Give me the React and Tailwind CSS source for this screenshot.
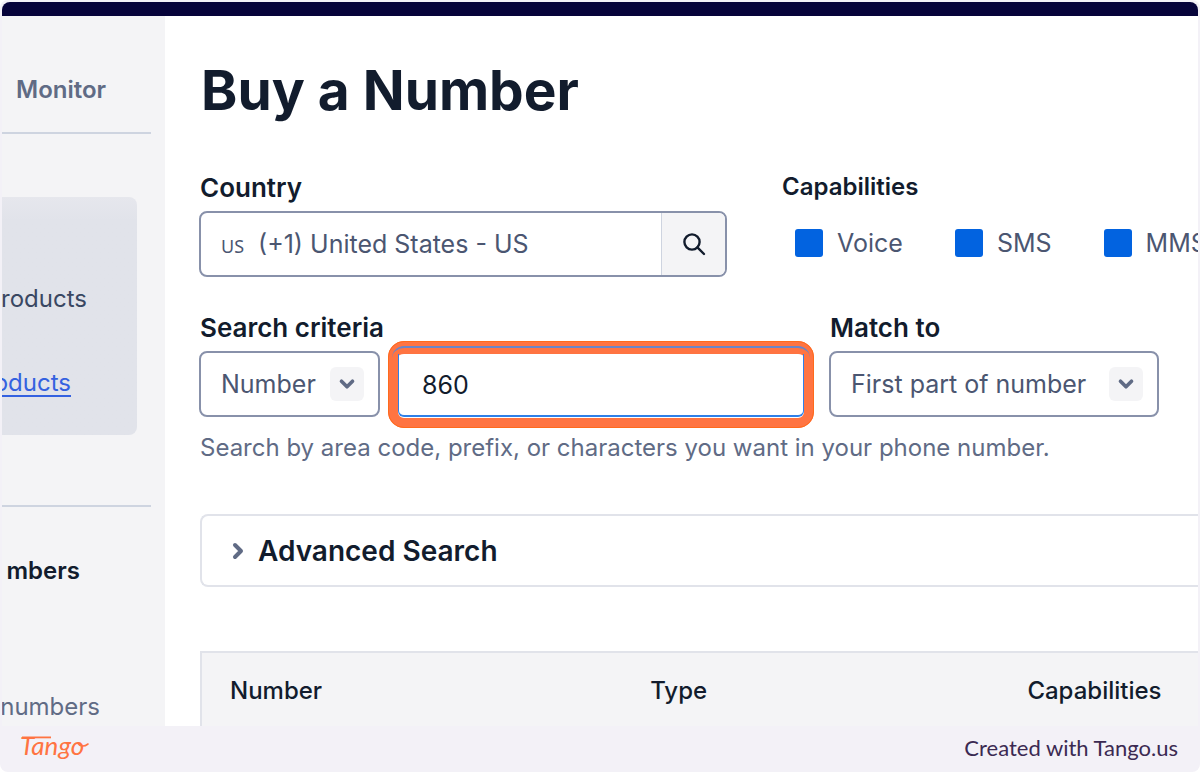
import { ChevronDown, ChevronRight } from 'lucide-react';

const capabilities = ['Voice', 'SMS', 'MMS'];

const Label = ({ htmlFor, children }) => (
  <label htmlFor={htmlFor} className="block pl-px text-[26px] leading-8 font-semibold text-[#121c2d] whitespace-nowrap">
    {children}
  </label>
);

const SelectBox = ({ id, options, className }) => (
  <div className={`relative h-[66px] ${className}`}>
    <select
      id={id}
      className="h-full w-full appearance-none rounded-lg border-2 border-[#8891aa] bg-white pt-0.5 pl-5 pr-14 text-[25px] text-[#4b5671] outline-none"
    >
      {options.map((option) => (
        <option key={option}>{option}</option>
      ))}
    </select>
    <span className="pointer-events-none absolute top-4 right-4 flex h-[34px] w-[34px] items-center justify-center rounded-md bg-[#f4f4f6]">
      <ChevronDown className="h-[22px] w-[22px] text-[#606b85]" strokeWidth={4} />
    </span>
  </div>
);

const Sidebar = () => (
  <aside className="w-[163px] shrink-0 overflow-hidden bg-[#f4f4f6]">
    <nav className="flex flex-col text-2xl leading-8">
      <div className="mr-3.5 border-b-2 border-[#ced4e0] pt-[58px] pb-[26px] pl-3.5">
        <a href="#monitor" className="font-semibold text-[#606b85]">Monitor</a>
      </div>
      <div className="mt-[63px] mr-7 flex h-[238px] flex-col items-end gap-[52px] overflow-hidden rounded-r-lg bg-linear-to-b from-[#e6e7ed] to-[#e1e3ea] to-10% pt-[86px]">
        <a href="#products" className="mr-[50px] text-[#394762]">roducts</a>
        <a href="#all-products" className="mr-[66px] text-[#3461e0] underline underline-offset-4">oducts</a>
      </div>
      <div className="mt-[70px] mr-3.5 border-b-2 border-[#ced4e0]"></div>
      <div className="mt-12 flex flex-col items-end gap-[104px]">
        <span className="mr-[85px] font-semibold text-[#121c2d]">mbers</span>
        <a href="#numbers" className="mr-[65px] text-[#606b85]">numbers</a>
      </div>
    </nav>
  </aside>
);

const CountryField = () => (
  <div className="w-[528px]">
    <Label htmlFor="country">Country</Label>
    <div className="mt-[7px] flex h-[66px] overflow-hidden rounded-lg border-2 border-[#8891aa] text-[#4b5671]">
      <span className="flex items-center pt-1 pl-5 font-['Noto_Sans',sans-serif] text-lg">US</span>
      <input
        id="country"
        type="text"
        defaultValue="(+1) United States - US"
        className="min-w-0 flex-1 pt-0.5 pl-3.5 text-[25px] outline-none"
      />
      <button type="button" aria-label="Search" className="flex w-16 items-center justify-center border-l border-[#ced4e0] bg-[#f4f4f6] text-[#121c2d]">
        <svg className="h-6 w-6" viewBox="0 0 24 24" fill="none" stroke="currentColor" strokeWidth="2.4">
          <circle cx="10" cy="10" r="7.6" />
          <path d="M15.4 15.4L22 22" strokeLinecap="round" />
        </svg>
      </button>
    </div>
  </div>
);

const CapabilitiesField = () => (
  <fieldset className="min-w-0 flex-1">
    <legend className="text-2xl leading-[30px] font-semibold text-[#121c2d]">Capabilities</legend>
    <div className="mt-[26px] flex gap-[52px] pl-[13px]">
      {capabilities.map((name) => (
        <label key={name} className="flex shrink-0 items-center gap-3.5 text-[25px] leading-[30px] text-[#4b5671]">
          <input type="checkbox" defaultChecked className="h-7 w-7 appearance-none rounded-[3px] bg-[#0263e0]" />
          {name}
        </label>
      ))}
    </div>
  </fieldset>
);

const TangoLogo = () => (
  <svg className="h-9 w-[72px] overflow-visible" viewBox="0 0 72 36" role="img" aria-label="Tango">
    <path d="M2 7.4H31" stroke="#ff7442" strokeWidth="1.8" fill="none" />
    <text x="0" y="25" fill="#ff7442" fontFamily="Lato, sans-serif" fontStyle="italic" fontWeight="400" fontSize="26">
      Tango
    </text>
    <path d="M58 13.500C60 16.500 64 17 68 14" stroke="#ff7442" strokeWidth="1.6" strokeLinecap="round" fill="none" />
  </svg>
);

export default function App() {
  return (
    <div className="h-screen bg-white font-['Inter',sans-serif]">
      <div className="flex h-full flex-col overflow-hidden rounded-lg bg-[#f3f1f7] px-0.5 pt-0.5">
        <header className="h-3.5 shrink-0 rounded-t-lg bg-[#06033a]"></header>

        <div className="flex min-h-0 flex-1 overflow-hidden bg-white">
          <Sidebar />

          <main className="min-w-0 flex-1 overflow-hidden pl-[34px]">
            <h1 className="mt-10 pl-0.5 text-[55px] leading-[68px] font-bold text-[#121c2d]">Buy a Number</h1>

            <div className="mt-12 flex gap-[55px]">
              <CountryField />
              <CapabilitiesField />
            </div>

            <div className="mt-[35px] mr-[39px] flex">
              <div className="flex-1">
                <Label htmlFor="criteria">Search criteria</Label>
                <div className="mt-[7px] flex gap-4">
                  <SelectBox id="criteria" className="w-[181px]" options={['Number', 'Location']} />
                  <div className="relative h-[66px] flex-1">
                    <input
                      type="text"
                      aria-label="Number"
                      defaultValue="860"
                      className="h-full w-full rounded-lg pt-0.5 pl-[26px] text-[25px] text-[#121c2d] outline-none"
                    />
                    {/* highlight ring with the focus outline showing through */}
                    <span className="pointer-events-none absolute -inset-x-2 -top-2.5 -bottom-[11px] rounded-2xl border-10 border-t-13 border-[#ff7442] outline-1 -outline-offset-1 outline-[#ff6a1c]"></span>
                    <span className="pointer-events-none absolute inset-x-0.5 top-[3px] bottom-0 rounded-b-md border-x border-b-2 border-[#2f80e8]"></span>
                    <span className="pointer-events-none absolute -inset-x-1 -top-[5px] bottom-0 rounded-xl border-t-2 border-[#6a86c8]"></span>
                  </div>
                </div>
              </div>
              <div className="ml-[23px] w-[330px]">
                <Label htmlFor="match">Match to</Label>
                <SelectBox id="match" className="mt-[7px] w-full" options={['First part of number', 'Anywhere in number']} />
              </div>
            </div>
            <p className="mt-[15px] pl-px text-2xl leading-8 whitespace-nowrap text-[#606b85]">
              Search by area code, prefix, or characters you want in your phone number.
            </p>

            <button type="button" className="mt-[50px] ml-px flex h-[73px] w-full items-center gap-2 rounded-l-lg border-2 border-r-0 border-[#e1e3ea] pl-6 text-[28px] font-semibold text-[#121c2d]">
              <ChevronRight className="h-6 w-6 text-[#606b85]" strokeWidth={4} />
              Advanced Search
            </button>

            <table className="mt-16 ml-px w-full table-fixed border-t-2 border-l-2 border-[#e1e3ea] bg-[#f4f4f6] text-left text-2xl leading-8 text-[#121c2d]">
              <thead>
                <tr className="h-24 align-top">
                  <th className="w-[42%] pt-[22px] pl-7 font-medium">Number</th>
                  <th className="w-[38%] pt-[22px] pl-[30px] font-medium">Type</th>
                  <th className="pt-[22px] pl-7 font-medium">Capabilities</th>
                </tr>
              </thead>
            </table>
          </main>
        </div>

        <footer className="flex h-[46px] shrink-0 items-center justify-between pr-5 pb-0.5 pl-[18px]">
          <TangoLogo />
          <span className="font-['Lato',sans-serif] text-[22px] leading-6 text-[#3b2a52]">Created with Tango.us</span>
        </footer>
      </div>
    </div>
  );
}
